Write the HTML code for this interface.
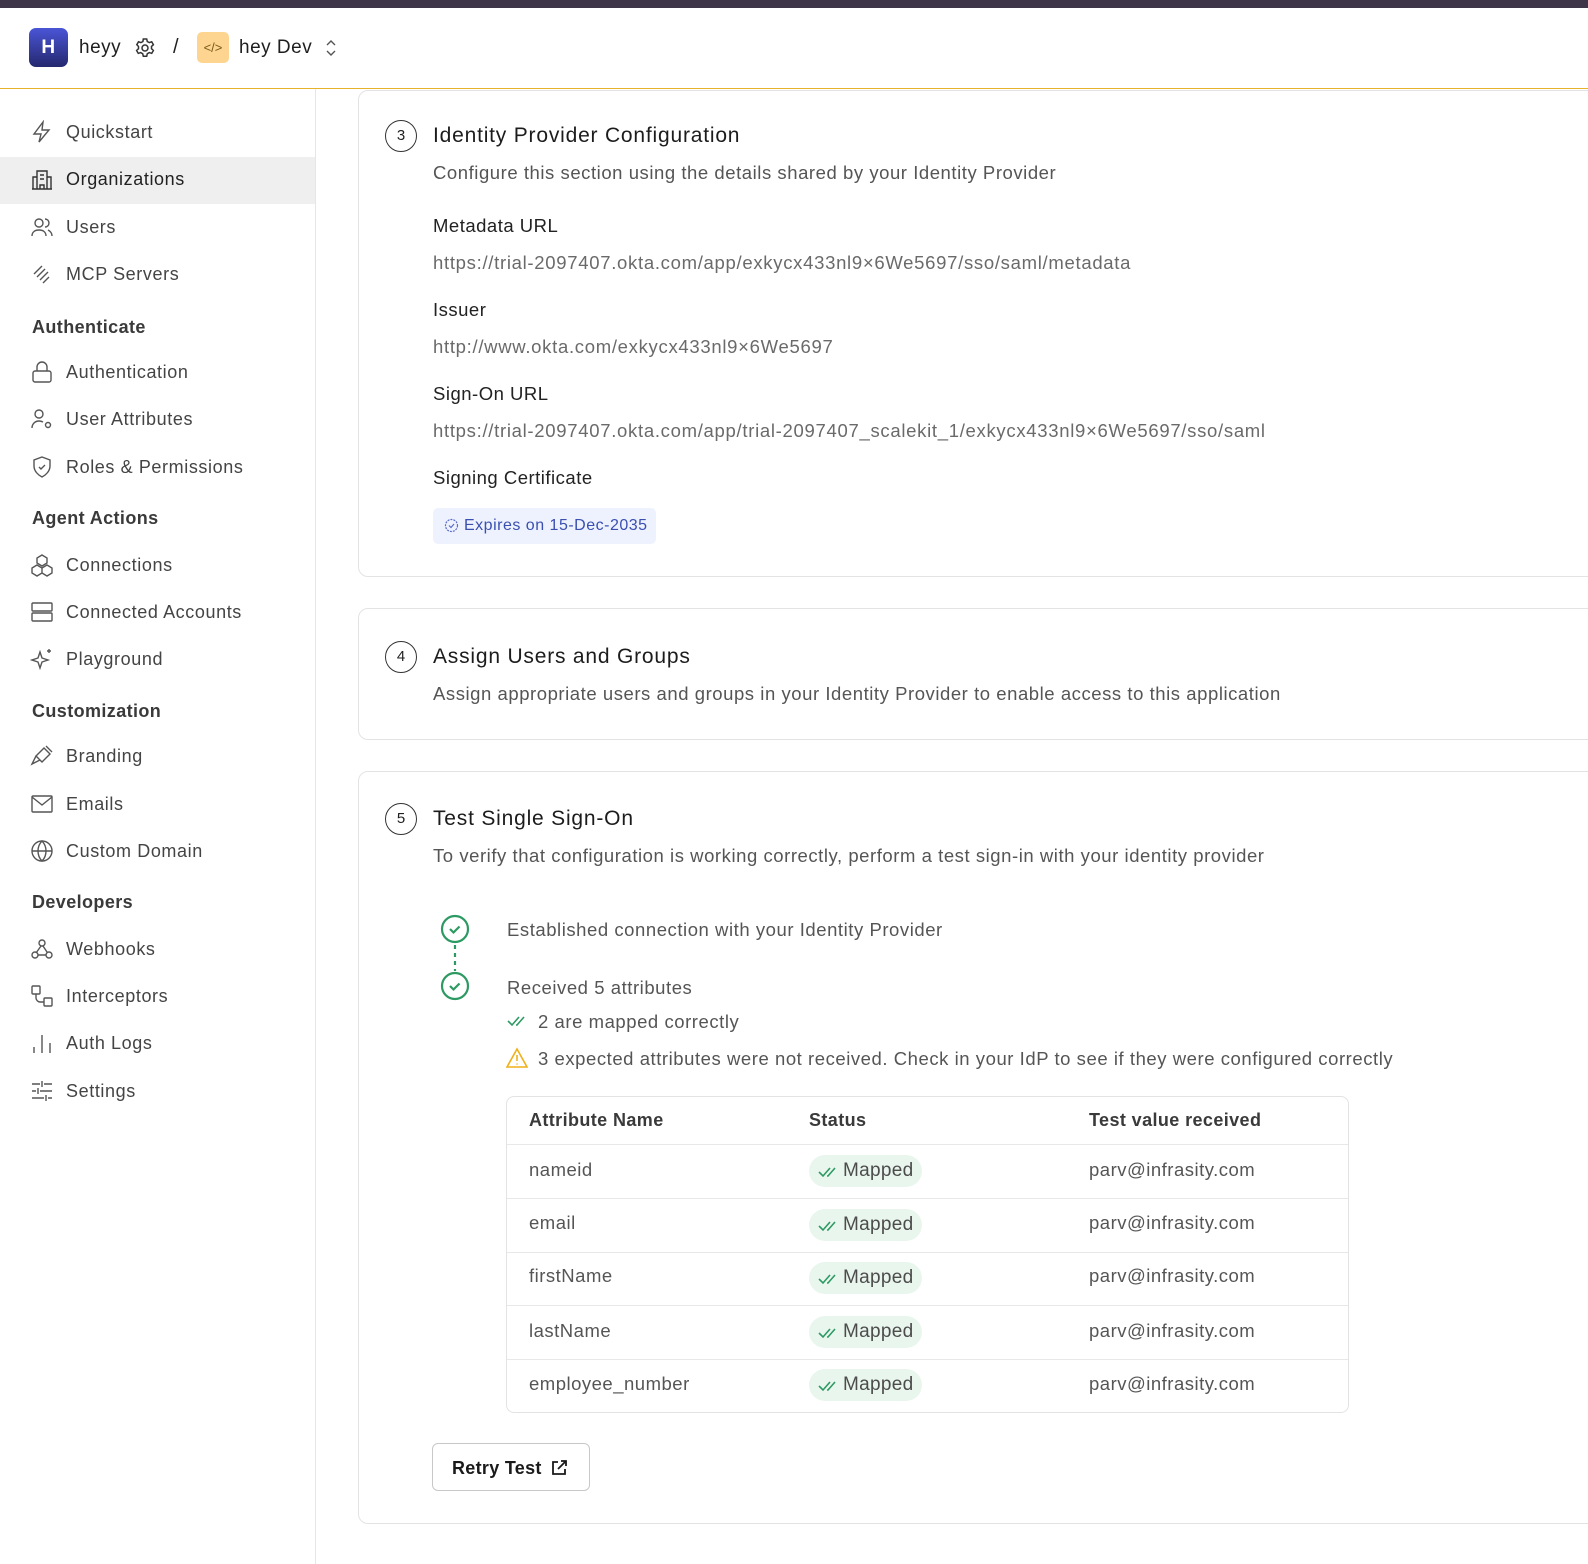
<!DOCTYPE html>
<html><head><meta charset="utf-8"><style>
*{box-sizing:border-box;margin:0;padding:0}
body{width:1588px;height:1564px;position:relative;overflow:hidden;background:#fff;font-family:"Liberation Sans",sans-serif;color:#1f1f1f;letter-spacing:0.5px}
.a{position:absolute;white-space:nowrap}
.topbar{left:0;top:0;width:1588px;height:8px;background:#3e3548}
.hdr{left:0;top:8px;width:1588px;height:81px;border-bottom:1.5px solid #e5b22a}
.side{left:0;top:89px;width:316px;height:1475px;border-right:1px solid #e6e6e6}
.nav{left:0;width:315px;height:47px;font-size:18px;color:#444;letter-spacing:0.6px}
.nav span{position:absolute;left:66px;top:14px}
.nav svg{position:absolute;left:30px;top:12px}
.sec{left:32px;font-size:18px;font-weight:bold;color:#3a3a3a;letter-spacing:0.4px}
.card{left:358px;width:1260px;border:1px solid #e3e3e3;border-radius:10px;background:#fff}
.num{width:32px;height:32px;border:1.5px solid #333;border-radius:50%;font-size:15px;text-align:center;line-height:29px;letter-spacing:0}
.t{font-size:21px;color:#1c1c1c;letter-spacing:0.8px}
.d{font-size:18.5px;color:#555;letter-spacing:0.55px}
.l{font-size:18.5px;color:#222;letter-spacing:0.5px}
.u{font-size:18.5px;color:#6a6a6a;letter-spacing:0.7px}
.badge{background:#eef2fe;color:#3a4fb0;border-radius:5px;font-size:16px;letter-spacing:0.5px}
.tbl{left:506px;top:1096px;width:843px;height:317px;border:1px solid #e3e3e3;border-radius:8px}
.th{font-size:18px;font-weight:bold;color:#3a3a3a;letter-spacing:0.4px}
.td{font-size:18.5px;color:#555;letter-spacing:0.5px}
.row{left:507px;width:841px;height:1px;background:#e8e8e8}
.pill{background:#e9f6ee;color:#4c4c4c;border-radius:16px;height:32px;width:113px;font-size:19px;line-height:32px;padding-left:34px;letter-spacing:0.3px}
.pill svg{position:absolute;left:9px;top:10px}
</style></head><body>
<div class="a topbar"></div>
<div class="a hdr">
  <div class="a" style="left:29px;top:20px;width:39px;height:39px;border-radius:7px;background:linear-gradient(#4a55d6,#25286e);color:#fff;font-weight:bold;font-size:19px;text-align:center;line-height:39px">H</div>
  <div class="a" style="left:79px;top:29px;font-size:19px">heyy</div>
  <svg class="a" style="left:133px;top:28px" width="24" height="24" viewBox="0 0 24 24" fill="none" stroke="#333" stroke-width="1.5"><circle cx="12" cy="12" r="3"/><path d="M10.3 3h3.4l.6 2.5 2 1.1 2.4-.8 1.7 2.9-1.9 1.8v2.2l1.9 1.8-1.7 2.9-2.4-.8-2 1.1-.6 2.5h-3.4l-.6-2.5-2-1.1-2.4.8-1.7-2.9 1.9-1.8v-2.2L3.8 8.7l1.7-2.9 2.4.8 2-1.1z"/></svg>
  <div class="a" style="left:173px;top:28px;font-size:20px">/</div>
  <div class="a" style="left:197px;top:24px;width:32px;height:31px;border-radius:5px;background:#fdd591;color:#7a5a1a;font-size:13px;text-align:center;line-height:31px;letter-spacing:0">&lt;/&gt;</div>
  <div class="a" style="left:239px;top:29px;font-size:19px">hey Dev</div>
  <svg class="a" style="left:324px;top:30px" width="14" height="20" viewBox="0 0 14 20" fill="none" stroke="#555" stroke-width="1.4"><path d="M3 7l4-4 4 4M3 13l4 4 4-4"/></svg>
</div>
<div class="a side"></div>
<div class="a" style="left:0;top:157px;width:315px;height:47px;background:#efefef"></div>

<div class="a nav" style="top:108px"><svg width="24" height="24" fill="none" stroke="#555" stroke-width="1.4"><path d="M13 2L4 14h7l-2 8 10-12h-7z"/></svg><span>Quickstart</span></div>
<div class="a nav" style="top:155px"><svg width="24" height="24" fill="none" stroke="#333" stroke-width="1.4"><path d="M7 22V4h10v18M3 22V10h4M17 10h4v12M2 22h20M10 8h4M10 12h4M10 22v-4h4v4"/></svg><span style="color:#222">Organizations</span></div>
<div class="a nav" style="top:203px"><svg width="24" height="24" fill="none" stroke="#555" stroke-width="1.4"><circle cx="9" cy="8" r="4"/><path d="M2 21c0-4 3-6 7-6s7 2 7 6M15 4a4 4 0 010 8M18 15c2 1 4 3 4 6"/></svg><span>Users</span></div>
<div class="a nav" style="top:250px"><svg width="24" height="24" fill="none" stroke="#555" stroke-width="1.4"><path d="M4 12l8-8M7 15l8-8M10 18l8-8M13 21l6-6"/></svg><span>MCP Servers</span></div>
<div class="a sec" style="top:317px">Authenticate</div>
<div class="a nav" style="top:348px"><svg width="24" height="24" fill="none" stroke="#555" stroke-width="1.4"><rect x="3" y="11" width="18" height="11" rx="2"/><path d="M7 11V7a5 5 0 0110 0v4"/></svg><span>Authentication</span></div>
<div class="a nav" style="top:395px"><svg width="24" height="24" fill="none" stroke="#555" stroke-width="1.4"><circle cx="9" cy="7" r="4"/><path d="M2 21c0-4 3-7 7-7 2 0 3 .5 4 1"/><circle cx="18" cy="18" r="2.5"/></svg><span>User Attributes</span></div>
<div class="a nav" style="top:443px"><svg width="24" height="24" fill="none" stroke="#555" stroke-width="1.4"><path d="M12 2l8 3v6c0 5-4 9-8 11-4-2-8-6-8-11V5z"/><path d="M9 12l2 2 4-4"/></svg><span>Roles &amp; Permissions</span></div>
<div class="a sec" style="top:508px">Agent Actions</div>
<div class="a nav" style="top:541px"><svg width="24" height="24" fill="none" stroke="#555" stroke-width="1.4"><path d="M12 2l5 3v5l-5 3-5-3V5zM7 12l5 3v5l-5 3-5-3v-5zM17 12l5 3v5l-5 3-5-3v-5z"/></svg><span>Connections</span></div>
<div class="a nav" style="top:588px"><svg width="24" height="24" fill="none" stroke="#555" stroke-width="1.4"><rect x="2" y="3" width="20" height="8" rx="1"/><rect x="2" y="13" width="20" height="8" rx="1"/></svg><span>Connected Accounts</span></div>
<div class="a nav" style="top:635px"><svg width="24" height="24" fill="none" stroke="#555" stroke-width="1.4"><path d="M10 5l2 6 6 2-6 2-2 6-2-6-6-2 6-2zM19 2v4M17 4h4"/></svg><span>Playground</span></div>
<div class="a sec" style="top:701px">Customization</div>
<div class="a nav" style="top:732px"><svg width="24" height="24" fill="none" stroke="#555" stroke-width="1.4"><path d="M14 4l6 6-8 8-6-6zM6 12l-4 8 8-4M16 2l6 6"/></svg><span>Branding</span></div>
<div class="a nav" style="top:780px"><svg width="24" height="24" fill="none" stroke="#555" stroke-width="1.4"><rect x="2" y="4" width="20" height="16" rx="1"/><path d="M2 5l10 8 10-8"/></svg><span>Emails</span></div>
<div class="a nav" style="top:827px"><svg width="24" height="24" fill="none" stroke="#555" stroke-width="1.4"><circle cx="12" cy="12" r="10"/><path d="M2 12h20M12 2c3 3 4 6 4 10s-1 7-4 10c-3-3-4-6-4-10s1-7 4-10z"/></svg><span>Custom Domain</span></div>
<div class="a sec" style="top:892px">Developers</div>
<div class="a nav" style="top:925px"><svg width="24" height="24" fill="none" stroke="#555" stroke-width="1.4"><circle cx="12" cy="6" r="3"/><circle cx="5" cy="18" r="3"/><circle cx="19" cy="18" r="3"/><path d="M11 9l-5 7M8 18h8M13 9l4 6"/></svg><span>Webhooks</span></div>
<div class="a nav" style="top:972px"><svg width="24" height="24" fill="none" stroke="#555" stroke-width="1.4"><rect x="2" y="2" width="8" height="8" rx="1"/><rect x="14" y="14" width="8" height="8" rx="1"/><path d="M6 10v4c0 2 2 4 4 4h4"/></svg><span>Interceptors</span></div>
<div class="a nav" style="top:1019px"><svg width="24" height="24" fill="none" stroke="#555" stroke-width="1.4"><path d="M4 22v-6M12 22V4M20 22v-10"/></svg><span>Auth Logs</span></div>
<div class="a nav" style="top:1067px"><svg width="24" height="24" fill="none" stroke="#555" stroke-width="1.4"><path d="M2 5h8M14 5h8M12 2v6M2 12h4M10 12h12M8 9v6M2 19h12M18 19h4M16 16v6"/></svg><span>Settings</span></div>

<!-- card 3 -->
<div class="a card" style="top:90px;height:487px"></div>
<div class="a num" style="left:385px;top:120px">3</div>
<div class="a t" style="left:433px;top:124px">Identity Provider Configuration</div>
<div class="a d" style="left:433px;top:162px">Configure this section using the details shared by your Identity Provider</div>
<div class="a l" style="left:433px;top:215px">Metadata URL</div>
<div class="a u" style="left:433px;top:252px">https://trial-2097407.okta.com/app/exkycx433nl9×6We5697/sso/saml/metadata</div>
<div class="a l" style="left:433px;top:299px">Issuer</div>
<div class="a u" style="left:433px;top:336px">http://www.okta.com/exkycx433nl9×6We5697</div>
<div class="a l" style="left:433px;top:383px">Sign-On URL</div>
<div class="a u" style="left:433px;top:420px">https://trial-2097407.okta.com/app/trial-2097407_scalekit_1/exkycx433nl9×6We5697/sso/saml</div>
<div class="a l" style="left:433px;top:467px">Signing Certificate</div>
<div class="a badge" style="left:433px;top:508px;width:223px;height:36px"></div>
<svg class="a" style="left:444px;top:518px" width="15" height="15" fill="none" stroke="#5a6cc8" stroke-width="1.2"><circle cx="7.5" cy="7.5" r="6" stroke-dasharray="2 1"/><path d="M5 7.5l2 2 3-3.5"/></svg>
<div class="a badge" style="left:464px;top:517px;background:none">Expires on 15-Dec-2035</div>

<!-- card 4 -->
<div class="a card" style="top:608px;height:132px"></div>
<div class="a num" style="left:385px;top:641px">4</div>
<div class="a t" style="left:433px;top:645px">Assign Users and Groups</div>
<div class="a d" style="left:433px;top:683px">Assign appropriate users and groups in your Identity Provider to enable access to this application</div>

<!-- card 5 -->
<div class="a card" style="top:771px;height:753px"></div>
<div class="a num" style="left:385px;top:803px">5</div>
<div class="a t" style="left:433px;top:807px">Test Single Sign-On</div>
<div class="a d" style="left:433px;top:845px">To verify that configuration is working correctly, perform a test sign-in with your identity provider</div>

<svg class="a" style="left:440px;top:913px" width="30" height="90" fill="none" stroke="#2e9a63" stroke-width="2.2"><circle cx="15" cy="16" r="13"/><path d="M10 16l3.5 3.5 6-6"/><path d="M15 32v26" stroke-dasharray="4 4"/><circle cx="15" cy="73" r="13"/><path d="M10 73l3.5 3.5 6-6"/></svg>
<div class="a d" style="left:507px;top:919px">Established connection with your Identity Provider</div>
<div class="a d" style="left:507px;top:977px">Received 5 attributes</div>
<svg class="a" style="left:507px;top:1014px" width="22" height="14" fill="none" stroke="#2e9a63" stroke-width="1.6"><path d="M1 7l4 4 7-8M9 11l1 0 7-8"/></svg>
<div class="a d" style="left:538px;top:1011px">2 are mapped correctly</div>
<svg class="a" style="left:506px;top:1047px" width="22" height="22" fill="none" stroke="#f0b01a" stroke-width="1.6"><path d="M11 2L1 20h20z"/><path d="M11 8v6M11 16.5v1"/></svg>
<div class="a d" style="left:538px;top:1048px">3 expected attributes were not received. Check in your IdP to see if they were configured correctly</div>

<div class="a tbl"></div>
<div class="a th" style="left:529px;top:1110px">Attribute Name</div>
<div class="a th" style="left:809px;top:1110px">Status</div>
<div class="a th" style="left:1089px;top:1110px">Test value received</div>
<div class="a row" style="top:1144px"></div>
<div class="a row" style="top:1198px"></div>
<div class="a row" style="top:1252px"></div>
<div class="a row" style="top:1305px"></div>
<div class="a row" style="top:1359px"></div>

<div class="a td" style="left:529px;top:1159px">nameid</div>
<div class="a td" style="left:529px;top:1212px">email</div>
<div class="a td" style="left:529px;top:1265px">firstName</div>
<div class="a td" style="left:529px;top:1320px">lastName</div>
<div class="a td" style="left:529px;top:1373px">employee_number</div>

<div class="a pill" style="left:809px;top:1155px"><svg width="22" height="14" fill="none" stroke="#2e9a63" stroke-width="1.6"><path d="M1 7l4 4 7-8M9 11l1 0 7-8"/></svg>Mapped</div>
<div class="a pill" style="left:809px;top:1209px"><svg width="22" height="14" fill="none" stroke="#2e9a63" stroke-width="1.6"><path d="M1 7l4 4 7-8M9 11l1 0 7-8"/></svg>Mapped</div>
<div class="a pill" style="left:809px;top:1262px"><svg width="22" height="14" fill="none" stroke="#2e9a63" stroke-width="1.6"><path d="M1 7l4 4 7-8M9 11l1 0 7-8"/></svg>Mapped</div>
<div class="a pill" style="left:809px;top:1316px"><svg width="22" height="14" fill="none" stroke="#2e9a63" stroke-width="1.6"><path d="M1 7l4 4 7-8M9 11l1 0 7-8"/></svg>Mapped</div>
<div class="a pill" style="left:809px;top:1369px"><svg width="22" height="14" fill="none" stroke="#2e9a63" stroke-width="1.6"><path d="M1 7l4 4 7-8M9 11l1 0 7-8"/></svg>Mapped</div>

<div class="a td" style="left:1089px;top:1159px">parv@infrasity.com</div>
<div class="a td" style="left:1089px;top:1212px">parv@infrasity.com</div>
<div class="a td" style="left:1089px;top:1265px">parv@infrasity.com</div>
<div class="a td" style="left:1089px;top:1320px">parv@infrasity.com</div>
<div class="a td" style="left:1089px;top:1373px">parv@infrasity.com</div>

<div class="a" style="left:432px;top:1443px;width:158px;height:48px;border:1px solid #c8c8c8;border-radius:6px"></div>
<div class="a" style="left:452px;top:1458px;font-size:18px;font-weight:bold;color:#1a1a1a;letter-spacing:0.3px">Retry Test</div>
<svg class="a" style="left:549px;top:1458px" width="20" height="20" fill="none" stroke="#1a1a1a" stroke-width="1.8"><path d="M9 4H4v12h12v-5M12 3h5v5M17 3l-8 8"/></svg>
</body></html>
